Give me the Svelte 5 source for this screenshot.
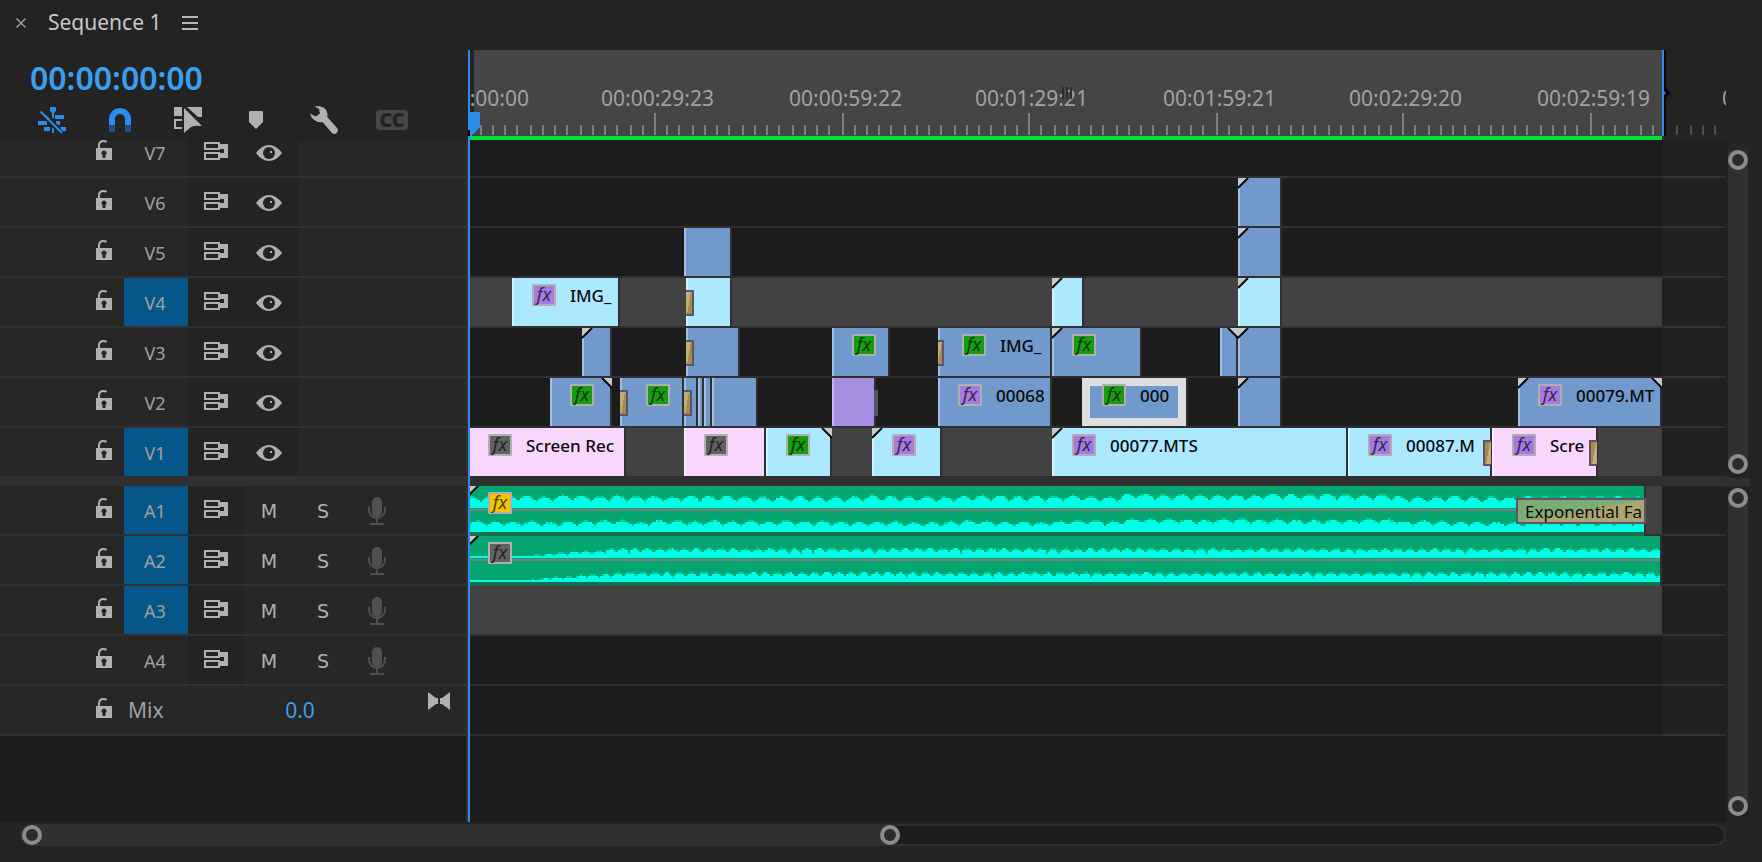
<script>
  // Timeline coordinates are in pixels from the start of the sequence.
  const duration = 1194;
  const tickStep = 12.47;

  const ticks = Array.from({ length: 100 }, (_, i) => {
    const n = i + 1;
    return { x: Math.floor((n * tickStep) / 2) * 2, major: n % 15 === 0 };
  });

  const timeLabels = [
    { x: -52, text: '00:00:00:00' },
    { x: 133, text: '00:00:29:23' },
    { x: 321, text: '00:00:59:22' },
    { x: 507, text: '00:01:29:21' },
    { x: 695, text: '00:01:59:21' },
    { x: 881, text: '00:02:29:20' },
    { x: 1069, text: '00:02:59:19' },
    { x: 1254, text: '00:03:29:18' }
  ];

  const video = $state([
    { id: 'V7', target: false, clips: [] },
    { id: 'V6', target: false, clips: [{ s: 770, e: 812, c: 'blue', tl: true }] },
    {
      id: 'V5',
      target: false,
      clips: [
        { s: 216, e: 262, c: 'blue' },
        { s: 770, e: 812, c: 'blue', tl: true }
      ]
    },
    {
      id: 'V4',
      target: true,
      clips: [
        { s: 44, e: 150, c: 'cyan', fx: 'violet', name: 'IMG_' },
        { s: 218, e: 262, c: 'cyan', tin: 8 },
        { s: 584, e: 614, c: 'cyan', tl: true },
        { s: 770, e: 812, c: 'cyan', tl: true }
      ]
    },
    {
      id: 'V3',
      target: false,
      clips: [
        { s: 114, e: 142, c: 'blue', tl: true },
        { s: 218, e: 270, c: 'blue', tin: 8 },
        { s: 364, e: 420, c: 'blue', fx: 'green' },
        { s: 470, e: 582, c: 'blue', tin: 6, fx: 'green', name: 'IMG_' },
        { s: 584, e: 672, c: 'blue', tl: true, fx: 'green' },
        { s: 752, e: 768, c: 'blue', tr: true },
        { s: 770, e: 812, c: 'blue', tl: true }
      ]
    },
    {
      id: 'V2',
      target: false,
      clips: [
        { s: 82, e: 142, c: 'blue', tr: true, fx: 'green' },
        { s: 152, e: 214, c: 'blue', tin: 8, fx: 'green' },
        { s: 216, e: 228, c: 'blue', tin: 8 },
        { s: 230, e: 234, c: 'blue' },
        { s: 236, e: 242, c: 'blue' },
        { s: 244, e: 288, c: 'blue' },
        { s: 364, e: 406, c: 'purple', tail: true },
        { s: 470, e: 582, c: 'blue', fx: 'violet', name: '00068' },
        { s: 614, e: 718, c: 'blue', fx: 'green', name: '000', selected: true },
        { s: 770, e: 812, c: 'blue', tl: true },
        { s: 1050, e: 1192, c: 'blue', tl: true, tr: true, fx: 'violet', name: '00079.MT' }
      ]
    },
    {
      id: 'V1',
      target: true,
      clips: [
        { s: 0, e: 156, c: 'pink', fx: 'gray', name: 'Screen Rec' },
        { s: 216, e: 296, c: 'pink', fx: 'gray' },
        { s: 298, e: 362, c: 'cyan', tr: true, fx: 'green' },
        { s: 404, e: 472, c: 'cyan', tl: true, fx: 'violet' },
        { s: 584, e: 878, c: 'cyan', tl: true, fx: 'violet', name: '00077.MTS' },
        { s: 880, e: 1022, c: 'cyan', tout: 6, fx: 'violet', name: '00087.M' },
        { s: 1024, e: 1128, c: 'pink', tout: 6, fx: 'violet', name: 'Scre' }
      ]
    }
  ]);

  function noise(n) {
    const v = Math.sin(n * 12.9898) * 43758.5453;
    return v - Math.floor(v);
  }

  // Builds one stepped channel: two-pixel columns rising from the base line,
  // with a softer step on top where the level falls between two steps.
  function channel(width, base, period, phase, low, swing, lift, fade) {
    let peak = `M0 ${base}`;
    let body = `M0 ${base}`;
    for (let x = 0; x < width; x += 2) {
      const t = Math.abs(Math.sin((Math.PI * (x + phase)) / period));
      const bump = Math.floor((x + phase) / period);
      const gain = fade ? Math.min(1, Math.max(0, (x - 20) / 130)) : 1;
      const up = lift && x > 650 && x < 930 ? 2 : 0;
      const jitter = (noise(bump + phase) - 0.5) * (fade ? 0.8 : 2) + (noise(x * 0.37 + phase) - 0.5) * 0.8;
      const level = (low + up + swing * t + jitter) * gain;
      const h = Math.max(2, Math.floor(level / 2) * 2);
      const top = level - h > 1 ? h + 2 : h;
      body += `V${base - h}H${x + 2}`;
      peak += `V${base - top}H${x + 2}`;
    }
    return { body: `${body}V${base}Z`, peak: `${peak}V${base}Z` };
  }

  const audio = $state([
    {
      id: 'A1',
      target: true,
      clip: {
        w: 1176,
        fx: 'gold',
        fade: 'Exponential Fa',
        waves: [channel(1174, 22, 18.2, 8, 7, 5, true, false), channel(1174, 46, 18.2, 3, 7, 4, true, false)]
      }
    },
    {
      id: 'A2',
      target: true,
      clip: {
        w: 1192,
        fx: 'gray',
        waves: [channel(1190, 22, 12.3, 2, 6, 4, false, true), channel(1190, 46, 12.3, 7, 6, 4, false, true)]
      }
    },
    { id: 'A3', target: true },
    { id: 'A4', target: false }
  ]);
</script>

{#snippet lock()}
  <button class="lock" aria-label="Toggle track lock">
    <svg width="16" height="20" viewBox="0 0 16 20">
      <path d="M3 8V5.500Q3 1 7.500 1Q9.500 1 10.500 2" fill="none" stroke="#b0b0b0" stroke-width="2" />
      <path d="M0 8H16V20H0Z" fill="#b0b0b0" />
      <path d="M8 10.500a2.600 2.600 0 0 1 1.500 4.700V18h-3v-2.800A2.600 2.600 0 0 1 8 10.500Z" fill="#272727" />
    </svg>
  </button>
{/snippet}

{#snippet sync()}
  <button class="sync" aria-label="Toggle sync lock">
    <svg width="24" height="18" viewBox="0 0 24 18">
      <path d="M1 1H15V7H1ZM1 11H15V17H1Z" fill="none" stroke="#b0b0b0" stroke-width="2" />
      <path d="M15 2H24V16H15V11H20V7H15Z" fill="#b0b0b0" />
    </svg>
  </button>
{/snippet}

{#snippet badge(kind)}
  <span class="fx {kind}">fx</span>
{/snippet}

{#snippet cornerLeft()}
  <svg class="corner left" width="11" height="11" viewBox="0 0 11 11">
    <path d="M0 0H9L0 9Z" fill="#c8c8c8" /><path d="M0 10L10 0" stroke="#0a0a0a" stroke-width="2" />
  </svg>
{/snippet}

{#snippet cornerRight()}
  <svg class="corner right" width="11" height="11" viewBox="0 0 11 11">
    <path d="M11 0H2L11 9Z" fill="#c8c8c8" /><path d="M11 10L1 0" stroke="#0a0a0a" stroke-width="2" />
  </svg>
{/snippet}

<main class="panel">
  <header class="tabs">
    <button class="close" aria-label="Close sequence">
      <svg width="10" height="10" viewBox="0 0 10 10"><path d="M0.500 0.500L9.500 9.500M9.500 0.500L0.500 9.500" stroke="#9a9a9a" stroke-width="1.500" /></svg>
    </button>
    <h1>Sequence 1</h1>
    <button class="menu" aria-label="Panel menu">
      <svg width="16" height="14" viewBox="0 0 16 14"><path d="M0 1H16M0 7H16M0 13H16" stroke="#b8b8b8" stroke-width="2" /></svg>
    </button>
  </header>

  <div class="work">
    <div class="top">
      <div class="controls">
        <button class="timecode">00:00:00:00</button>
        <div class="tools">
          <button aria-label="Insert sequences as nests">
            <svg width="28" height="27" viewBox="0 0 28 27">
              <path fill="#2d8ceb" d="M12 0H18V4L16 6V12L14 10V6L12 4ZM17 8H26V12H17ZM6 8H8L12 12H10ZM0 14H9V18H0ZM18 14H22V18H20L18 16ZM6 20H12V24H6ZM14 20L16 22V26H14ZM22 20H28V24H24Z" />
              <path d="M2.500 4.500L24 26" stroke="#2d8ceb" stroke-width="2" />
            </svg>
          </button>
          <button aria-label="Snap">
            <svg width="22" height="24" viewBox="0 0 22 24">
              <path fill="#2d8ceb" d="M0 17V11a11 11 0 0 1 22 0V17H16V11a5 5 0 0 0-10 0V17Z" />
              <path fill="#1c5086" d="M0 17H6V24H0ZM16 17H22V24H16Z" />
            </svg>
          </button>
          <button aria-label="Linked selection">
            <svg width="28" height="26" viewBox="0 0 28 26">
              <path fill="#b0b0b0" d="M0 0H8V9H0ZM13 0H28V10H24ZM10 1L28 19Q21 18 17 20L10 26Z" />
              <path d="M8 13H1V21H8" fill="none" stroke="#b0b0b0" stroke-width="2" />
            </svg>
          </button>
          <button aria-label="Add marker">
            <svg width="14" height="18" viewBox="0 0 14 18"><path fill="#b0b0b0" d="M1 0H13L14 1V11L7 18L0 11V1Z" /></svg>
          </button>
          <button aria-label="Timeline display settings">
            <svg width="28" height="28" viewBox="0 0 28 28">
              <path fill="#b0b0b0" d="M4.500 0.500C10-0.500 16.500 0.500 17.500 8L17.300 11L27.500 22.500C29 26 25.500 29 22.500 27.500L12.500 16C8 17 2 14.500 0 7.500L6 10.500L10 7.500L9 3Z" />
            </svg>
          </button>
          <button class="cc" aria-label="Caption track options">CC</button>
        </div>
      </div>

      <div class="ruler">
        <div class="span" style:width="{duration}px"></div>
        {#each ticks as t}
          <i class="tick" class:major={t.major} class:beyond={t.x > duration} style:left="{t.x}px"></i>
        {/each}
        {#each timeLabels as l}
          <span class="time" style:left="{l.x}px">{l.text}</span>
        {/each}
        <svg class="grip" width="11" height="12" viewBox="0 0 11 12"><path d="M1 0V12M5 0V12M9 0V12" stroke="#2f2f2f" stroke-width="2" /></svg>
        <svg class="outpoint" width="9" height="86" viewBox="0 0 9 86">
          <path d="M2 0H4V38L8.500 43L4 48V86H2Z" fill="#050505" /><path d="M0 0H2V41L4 43L2 45V86H0Z" fill="#2d8ceb" />
        </svg>
        <div class="render" style:width="{duration - 2}px"></div>
      </div>
      <div class="gutter"></div>
    </div>

    <section class="video" aria-label="Video tracks">
      <div class="heads">
        {#each video as t}
          <div class="head">
            {@render lock()}
            <button class="name" class:target={t.target} aria-pressed={t.target} onclick={() => (t.target = !t.target)}>{t.id}</button>
            <div class="toggles wide">
              {@render sync()}
              <button class="eye" aria-label="Toggle track output">
                <svg width="26" height="16" viewBox="0 0 26 16">
                  <path d="M0 8Q6 0 13 0T26 8Q20 16 13 16T0 8Z" fill="#b0b0b0" />
                  <circle cx="13" cy="8" r="6" fill="#232323" /><path d="M14 6H16V8H14Z" fill="#b0b0b0" />
                </svg>
              </button>
            </div>
          </div>
        {/each}
      </div>
      <div class="lanes">
        {#each video as t}
          <div class="lane">
            <div class="seq" class:target={t.target} style:width="{duration}px">
              {#each t.clips as k}
                <div class="clip {k.c}" class:selected={k.selected} style:left="{k.s}px" style:width="{k.e - k.s + 2}px">
                  {#if k.tin}<i class="trans in" style:width="{k.tin}px"></i>{/if}
                  {#if k.tout}<i class="trans out" style:width="{k.tout + 2}px"></i>{/if}
                  {#if k.tail}<i class="tail"></i>{/if}
                  {#if k.tl}{@render cornerLeft()}{/if}
                  {#if k.tr}{@render cornerRight()}{/if}
                  {#if k.fx}
                    <div class="label" style:padding-left="{20 + (k.tin ? k.tin - 2 : 0)}px">
                      {@render badge(k.fx)}
                      {#if k.name}<span class="title">{k.name}</span>{/if}
                    </div>
                  {/if}
                </div>
              {/each}
            </div>
          </div>
        {/each}
      </div>
      <div class="vscroll first"><div class="thumb"><button class="ring" aria-label="Zoom video tracks up"></button><button class="ring" aria-label="Zoom video tracks down"></button></div></div>
    </section>

    <div class="divider"></div>

    <section class="audio" aria-label="Audio tracks">
      <div class="heads">
        {#each audio as t}
          <div class="head">
            {@render lock()}
            <button class="name" class:target={t.target} aria-pressed={t.target} onclick={() => (t.target = !t.target)}>{t.id}</button>
            <div class="toggles">{@render sync()}</div>
            <button class="ms" aria-label="Mute track">M</button>
            <button class="ms" aria-label="Solo track">S</button>
            <button class="ms mic" aria-label="Voice-over record">
              <svg width="18" height="28" viewBox="0 0 18 28">
                <rect x="4" y="0" width="10" height="20" rx="5" fill="#505050" />
                <path d="M1 10V13a8 8 0 0 0 16 0V10M9 21V27M2 27H16" fill="none" stroke="#505050" stroke-width="2" />
              </svg>
            </button>
          </div>
        {/each}
        <div class="head">
          {@render lock()}
          <span class="mix">Mix</span>
          <button class="level" aria-label="Mix volume">0.0</button>
          <button class="bow" aria-label="Show channels">
            <svg width="22" height="18" viewBox="0 0 22 18"><path d="M0 0L8 6H10V12H8L0 18ZM22 0L14 6H12V12H14L22 18Z" fill="#b0b0b0" /></svg>
          </button>
        </div>
      </div>
      <div class="lanes">
        {#each audio as t}
          <div class="lane">
            <div class="seq" class:target={t.target} style:width="{duration}px">
              {#if t.clip}
                <div class="clip sound" style:width="{t.clip.w}px">
                  <svg class="wave" width={t.clip.w - 2} height="50">
                    {#each t.clip.waves as w}
                      <path d={w.peak} fill="#00d09f" /><path d={w.body} fill="#00ffe6" />
                    {/each}
                    <rect y="23" width={t.clip.w} height="2" fill="#7c7f7c" />
                    <rect y="46" width={t.clip.w} height="4" fill="#196c4c" />
                  </svg>
                  {@render cornerLeft()}
                  <div class="label">{@render badge(t.clip.fx)}</div>
                  {#if t.clip.fade}<div class="fade">{t.clip.fade}</div>{/if}
                </div>
              {/if}
            </div>
          </div>
        {/each}
        <div class="lane"><div class="seq" style:width="{duration}px"></div></div>
      </div>
      <div class="vscroll second"><div class="thumb"><button class="ring" aria-label="Zoom audio tracks up"></button><button class="ring" aria-label="Zoom audio tracks down"></button></div></div>
    </section>

    <div class="playhead">
      <svg width="12" height="24" viewBox="0 0 12 24"><path d="M0 0H12V15L4 24H0Z" fill="#2d8ceb" /><path d="M0 18H2V24H0Z" fill="#050505" /></svg>
    </div>
  </div>

  <footer>
    <div class="hscroll"><div class="hthumb"><button class="ring" aria-label="Zoom timeline start"></button><button class="ring" aria-label="Zoom timeline end"></button></div></div>
  </footer>
</main>

<style>
  :global(body) {
    margin: 0;
    background: #232323;
  }
  * {
    box-sizing: border-box;
  }
  button {
    margin: 0;
    padding: 0;
    border: 0;
    background: none;
    color: inherit;
    font: inherit;
    cursor: pointer;
  }
  svg {
    display: block;
  }
  .panel {
    display: flex;
    flex-direction: column;
    min-height: 100vh;
    overflow: hidden;
    background: #232323;
    color: #a0a0a0;
    font: 18px/24px 'Noto Sans', sans-serif;
  }
  .tabs {
    display: flex;
    align-items: center;
    height: 50px;
    padding: 0 16px 4px;
  }
  h1 {
    margin: 0 21px 2px 22px;
    font-size: 21px;
    font-weight: 400;
    color: #c8c8c8;
  }
  .work {
    position: relative;
    flex: 1;
    display: flex;
    flex-direction: column;
  }
  .top {
    display: flex;
    height: 90px;
  }
  .controls,
  .heads {
    flex: 0 0 468px;
  }
  .timecode {
    display: block;
    height: 40px;
    margin: 8px 0 0 30px;
    font-size: 32px;
    line-height: 40px;
    font-weight: 600;
    color: #3a9ff0;
  }
  .tools {
    display: grid;
    grid-template-columns: repeat(5, 68px) 1fr;
    width: 408px;
    margin-left: 18px;
    height: 42px;
    padding-top: 2px;
  }
  .tools button {
    display: grid;
    place-items: center;
    align-self: center;
  }
  .tools .cc {
    width: 32px;
    height: 20px;
    margin-left: 18px;
    border-radius: 4px;
    background: #474747;
    color: #232323;
    font-size: 20px;
    line-height: 20px;
    font-weight: 900;
  }
  .ruler {
    position: relative;
    flex: 1;
    border-bottom: 4px solid #272727;
    font-size: 21px;
    clip-path: inset(0);
  }
  .gutter {
    width: 36px;
  }
  .span {
    height: 86px;
    border-left: 6px solid #232323;
    background: #454545;
  }
  .tick {
    position: absolute;
    top: 75px;
    width: 2px;
    height: 10px;
    background: #7d7d7d;
  }
  .tick.major {
    top: 63px;
    height: 22px;
  }
  .tick.beyond {
    background: #4c4c4c;
  }
  .time {
    position: absolute;
    top: 36px;
    line-height: 24px;
    color: #a2a2a2;
  }
  .grip {
    position: absolute;
    left: 594px;
    top: 37px;
  }
  .outpoint {
    position: absolute;
    left: 1194px;
    top: 0;
  }
  .render {
    position: absolute;
    left: 2px;
    top: 86px;
    height: 4px;
    background: #00e33c;
  }
  .video {
    display: flex;
    height: 338px;
  }
  .video .heads,
  .video .lanes {
    display: flex;
    flex-direction: column;
    justify-content: flex-end;
    overflow: hidden;
  }
  .heads {
    border-right: 2px solid #303030;
  }
  .head {
    display: flex;
    flex: 0 0 50px;
    height: 50px;
    padding-left: 96px;
    border-bottom: 2px solid #303030;
    background: #272727;
  }
  .lock {
    width: 28px;
    padding: 12px 12px 16px 0;
  }
  .name {
    width: 64px;
    padding: 2px 2px 0 0;
  }
  .name.target {
    background: #075689;
  }
  .toggles {
    display: flex;
    align-items: flex-start;
    gap: 28px;
    width: 56px;
    padding: 14px 16px;
    background: #232323;
  }
  .toggles.wide {
    width: 110px;
  }
  .eye {
    padding-top: 3px;
  }
  .ms {
    display: grid;
    place-items: center;
    width: 54px;
    padding: 2px 4px 0 0;
    font: 19px/24px 'DejaVu Sans', sans-serif;
    color: #b0b0b0;
  }
  .mix {
    width: 100px;
    padding: 12px 0 0 4px;
    font-size: 21px;
  }
  .level {
    width: 152px;
    font-size: 21px;
    color: #3a9ff0;
  }
  .bow {
    margin: 6px 0 24px auto;
    padding-right: 16px;
  }
  .lanes {
    flex: 1;
    min-width: 0;
    overflow: hidden;
    background: #1c1c1c;
  }
  .lane {
    flex: 0 0 50px;
    height: 50px;
    border-bottom: 2px solid #303030;
    background: #212121;
  }
  .seq {
    position: relative;
    height: 48px;
    background: #1c1c1c;
  }
  .seq.target {
    background: #424242;
  }
  .clip {
    position: absolute;
    top: 0;
    height: 48px;
    border-left: 2px solid;
    border-right: 2px solid #303030;
    color: #0a0a0a;
    font-size: 17px;
    font-weight: 500;
    white-space: nowrap;
  }
  .blue {
    background: #7199cc;
    border-left-color: #a3c0e4;
  }
  .cyan {
    background: #ace8ff;
    border-left-color: #d2f4ff;
  }
  .pink {
    background: #f8d7ff;
    border-left-color: #fdeaff;
  }
  .purple {
    background: #a68ee0;
    border-left-color: #c8b6f2;
  }
  .sound {
    left: 2px;
    height: 50px;
    border-left: 0;
    background: #04a570;
    z-index: 1;
  }
  .selected {
    border-left-color: #dedede;
    box-shadow:
      inset 6px 0 #dedede,
      inset -8px 0 #dedede,
      inset 0 8px #dedede,
      inset 0 -8px #dedede;
  }
  .label {
    position: relative;
    display: flex;
    align-items: center;
    gap: 14px;
    height: 22px;
    margin: 6px 0 0 -2px;
  }
  .sound .label {
    margin-left: 18px;
  }
  .title {
    padding-top: 2px;
  }
  .fx {
    flex: 0 0 24px;
    height: 22px;
    border: 2px solid #b0b0b0;
    border-radius: 1px;
    text-align: center;
    font-style: italic;
    font-weight: 400;
    font-size: 18px;
    line-height: 17px;
    color: #222;
  }
  .fx.green {
    background: #179c12;
    color: #0a3a08;
  }
  .fx.violet {
    background: #a77ae2;
    color: #35264a;
  }
  .fx.gray {
    background: #626262;
  }
  .fx.gold {
    background: #f6c400;
    color: #4d3e00;
  }
  .corner {
    position: absolute;
    top: 0;
    z-index: 2;
  }
  .corner.left {
    left: -2px;
  }
  .corner.right {
    right: -2px;
  }
  .trans {
    position: absolute;
    top: 12px;
    height: 26px;
    border: 2px solid #5d5370;
    background: linear-gradient(100deg, #c2ad78 50%, #a58c48 50%);
    z-index: 1;
  }
  .trans.in {
    left: -2px;
    border-left: 0;
  }
  .trans.out {
    right: -1px;
    border-right: 0;
    background: linear-gradient(100deg, #a58c48 50%, #c2ad78 50%);
  }
  .tail {
    position: absolute;
    right: -4px;
    top: 12px;
    width: 4px;
    height: 26px;
    background: #575265;
    z-index: 1;
  }
  .wave {
    position: absolute;
    inset: 0 auto auto 0;
  }
  .fade {
    position: absolute;
    right: -2px;
    top: 12px;
    width: 130px;
    height: 26px;
    padding-left: 7px;
    border: 2px solid #5d5370;
    background: linear-gradient(170deg, #7dac77 50%, #aba572 50%);
    font-weight: 400;
    line-height: 23px;
  }
  .divider {
    height: 8px;
    margin-right: 12px;
    background: #303030;
  }
  .audio {
    display: flex;
    flex: 1;
    min-height: 336px;
  }
  .audio .heads {
    background: #1c1c1c;
  }
  .vscroll {
    flex: 0 0 36px;
    padding: 2px 14px 0 2px;
  }
  .thumb {
    display: flex;
    flex-direction: column;
    justify-content: space-between;
    border-radius: 10px;
    background: #303030;
  }
  .vscroll.first .thumb {
    height: 332px;
    border-top: 8px solid #272727;
  }
  .vscroll.second .thumb {
    height: calc(100% - 6px);
  }
  .ring {
    width: 20px;
    height: 20px;
    border: 4px solid #8c8c8c;
    border-radius: 50%;
    background: #2b2b2b;
  }
  .playhead {
    position: absolute;
    left: 468px;
    top: 0;
    bottom: 0;
    width: 2px;
    padding-top: 62px;
    background: #2d8ceb;
    z-index: 3;
  }
  footer {
    height: 40px;
    padding: 2px 36px 16px 20px;
  }
  .hscroll {
    height: 22px;
    border: 2px solid #303030;
    border-radius: 11px;
    background: #1c1c1c;
  }
  .hthumb {
    display: flex;
    align-items: center;
    justify-content: space-between;
    width: 51.6%;
    height: 22px;
    margin-top: -2px;
    border-radius: 11px;
    background: #303030;
  }
</style>
